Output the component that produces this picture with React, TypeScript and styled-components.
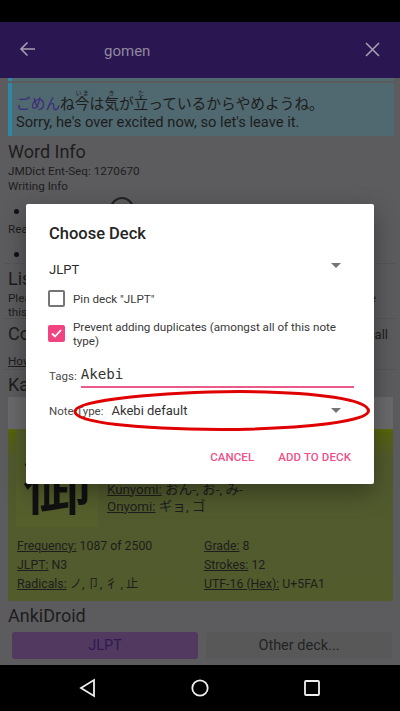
import styled, { createGlobalStyle } from 'styled-components'

const Global = createGlobalStyle`
    html, body {
        background: #000;
        height: 100%;
        margin: 0;
    }

    #root {
        height: 100%;
    }

    * {
        box-sizing: border-box;
    }
`

const Screen = styled.div`
    display: flex;
    flex-direction: column;
    font-family: Roboto, 'Noto Sans CJK JP', sans-serif;
    height: 711px;
    overflow: hidden;
    position: relative;
    width: 400px;
`

const StatusBar = styled.div`
    background: #000;
    flex: 0 0 22px;
`

const AppBar = styled.header`
    align-items: center;
    background: #2a1751;
    display: flex;
    flex: 0 0 56px;
    padding: 0 20px 2px 19px;
`

const SearchText = styled.div`
    color: #8f879d;
    flex: 1;
    font-size: 15px;
    padding-left: 68px;
    padding-top: 3px;
`

const Content = styled.main`
    background: #5c5c5e;
    color: #1d1d1d;
    display: flex;
    flex: 1;
    flex-direction: column;
    min-height: 0;
    padding: 0 3px;
`

const PreviousCard = styled.div`
    background: #50686f;
    border-left: 4px solid #2f86a6;
    flex: 0 0 3px;
    margin: 0 3px 0 5px;
`

const ExampleCard = styled.section`
    background: #50686f;
    border-left: 4px solid #2f86a6;
    flex: 0 0 53px;
    margin: 2px 3px 3px 5px;
    padding-left: 4px;
`

const JapaneseLine = styled.div`
    font-size: 14.7px;
    height: 29px;
    line-height: 20px;
    padding-top: 11px;
    white-space: nowrap;

    ruby {
        ruby-position: over;
    }

    rt {
        font-size: 6px;
    }
`

const Highlight = styled.span`
    color: #3b2a78;
`

const EnglishLine = styled.div`
    font-size: 14.7px;
    line-height: 20px;
    white-space: nowrap;
`

const Block = styled.section<{ $height: number; $top: number }>`
    border-bottom: 1px solid #555557;
    flex: 0 0 ${(p) => p.$height}px;
    overflow: hidden;
    padding: ${(p) => p.$top}px 0 0 5px;
`

const Heading = styled.h2`
    font-size: 18px;
    font-weight: 400;
    line-height: 24px;
    margin: 0;
`

const KanjiHeading = styled(Heading)`
    flex: 0 0 26px;
    padding: 3px 0 0 5px;
`

const Small = styled.div`
    font-size: 11.7px;
    line-height: 15px;
    white-space: nowrap;
`

const Wrapped = styled(Small)`
    display: flex;
    justify-content: space-between;
    line-height: 14px;
    padding-right: 21px;
`

const BulletRow = styled.div<{ $height: number }>`
    align-items: flex-start;
    display: flex;
    gap: 91px;
    height: ${(p) => p.$height}px;
    padding: 2.5px 0 0 6px;
`

const Bullet = styled.span`
    background: #111;
    border-radius: 50%;
    flex: 0 0 5px;
    height: 5px;
    margin-top: 12px;
`

const PlayCircle = styled.span`
    border: 2px solid #222;
    border-radius: 50%;
    display: block;
    height: 24px;
    width: 24px;
`

const CommentsRow = styled.div`
    align-items: center;
    display: flex;
    justify-content: space-between;
    padding-right: 9px;
`

const CommentsLink = styled.span`
    font-size: 13px;
`

const HowLine = styled(Small)`
    margin-top: 7.5px;
    text-decoration: underline;
`

const KanjiTab = styled.div`
    background: #6a6a6c;
    flex: 0 0 32px;
    margin: 0 4px 0 5px;
`

const KanjiCard = styled.section`
    background: #515b2c;
    background-image: linear-gradient(#5a6a10 0, #56620f 4px, #515a2e 30px, #515b2c 100%);
    display: flex;
    flex: 0 0 172px;
    flex-direction: column;
    margin: 0 4px 0 5px;
    padding: 0 8px;
`

const KanjiRow = styled.div`
    display: flex;
    height: 98px;
`

const KanjiBox = styled.div`
    align-items: flex-end;
    background: #555f2c;
    color: #111;
    display: flex;
    font-family: 'Noto Sans CJK JP', sans-serif;
    font-size: 68px;
    font-weight: 500;
    height: 98px;
    justify-content: center;
    line-height: 86px;
    overflow: hidden;
    padding-bottom: 4px;
    width: 82px;
`

const Readings = styled.div`
    font-size: 13.3px;
    line-height: 17px;
    padding: 51.5px 0 0 9px;
`

const Kana = styled.span`
    font-size: 13.6px;
`

const Label = styled.span`
    text-decoration: underline;
`

const FactGrid = styled.div`
    display: grid;
    font-size: 12.3px;
    grid-template-columns: 187px 1fr;
    line-height: 19px;
    margin: 9.5px 0 0 1px;
`

const AnkiBlock = styled.section`
    display: flex;
    flex: 1;
    flex-direction: column;
    padding: 3px 0 0 5px;
`

const AnkiButtons = styled.div`
    display: grid;
    gap: 8px;
    grid-template-columns: 186px 186px;
    margin: 4px 0 0 4px;
`

const AnkiButton = styled.div<{ $primary?: boolean }>`
    align-items: center;
    background: ${(p) => (p.$primary ? '#52395f' : '#585858')};
    border-radius: 3px;
    color: ${(p) => (p.$primary ? '#2d1b52' : '#232323')};
    display: flex;
    font-size: 14.5px;
    height: 27px;
    justify-content: center;
`

const NavBar = styled.nav`
    align-items: center;
    background: #000;
    display: grid;
    flex: 0 0 46px;
    grid-template-columns: repeat(3, 112px);
    justify-content: center;
    justify-items: center;
`

const Dialog = styled.div`
    background: #fff;
    border-radius: 2px;
    box-shadow: 0 8px 24px rgba(0, 0, 0, 0.35);
    color: #2a2a2a;
    display: flex;
    flex-direction: column;
    height: 280px;
    left: 26px;
    padding: 19px 20px 0 23px;
    position: absolute;
    top: 204px;
    width: 348px;
`

const DialogTitle = styled.h1`
    color: #252525;
    font-size: 16.5px;
    font-weight: 500;
    line-height: 22px;
    margin: 0 0 13px;
`

const Spinner = styled.div`
    align-items: center;
    display: flex;
    flex: 0 0 22px;
    font-size: 13px;
    justify-content: space-between;
    padding-right: 13px;
`

const Caret = styled.span<{ $lift?: number }>`
    border-left: 5px solid transparent;
    border-right: 5px solid transparent;
    border-top: 5px solid #757575;
    display: block;
    margin-top: ${(p) => -(p.$lift ?? 0)}px;
`

const Check = styled.div<{ $top: number }>`
    align-items: center;
    color: #3a3a3a;
    display: flex;
    font-size: 11.65px;
    gap: 8px;
    line-height: 14px;
    margin: ${(p) => p.$top}px 0 0 -1px;
`

const CheckText = styled.span<{ $shift?: number }>`
    padding-top: ${(p) => p.$shift ?? 0}px;
`

const Box = styled.span<{ $checked?: boolean }>`
    align-items: center;
    background: ${(p) => (p.$checked ? '#f0437f' : '#fff')};
    border: 2px solid ${(p) => (p.$checked ? '#f0437f' : '#757575')};
    border-radius: 2px;
    display: flex;
    flex: 0 0 17px;
    height: 17px;
    justify-content: center;
`

const TagsRow = styled.div`
    align-items: flex-end;
    color: #4a4a4a;
    display: flex;
    font-size: 11.5px;
    gap: 4px;
    margin-top: 15.5px;
`

const TagsLabel = styled.span`
    padding-bottom: 5px;
`

const TagsInput = styled.div`
    border-bottom: 2px solid #ec5a8c;
    color: #333;
    flex: 1;
    font-family: 'DejaVu Sans Mono', monospace;
    font-size: 14.2px;
    line-height: 19px;
    padding: 1px 0 2px;
`

const NoteRow = styled.div`
    align-items: center;
    color: #4a4a4a;
    display: flex;
    font-size: 11.5px;
    gap: 8px;
    height: 20px;
    margin-top: 13px;
    padding-right: 13px;
`

const NoteValue = styled.div`
    color: #333;
    flex: 1;
    font-size: 13px;
`

const Actions = styled.div`
    color: #f0508a;
    display: flex;
    font-size: 11.5px;
    font-weight: 500;
    gap: 24px;
    justify-content: flex-end;
    letter-spacing: 0.1px;
    line-height: 13px;
    margin-top: 30.5px;
    padding-right: 3px;
`

const Annotation = styled.svg`
    left: 70px;
    pointer-events: none;
    position: absolute;
    top: 388px;
`

function App() {
    return (
        <Screen>
            <Global />
            <StatusBar />
            <AppBar>
                <svg width="17" height="16" viewBox="0 0 17 16" fill="none" stroke="#a59db3" strokeWidth="1.6">
                    <path d="M16 8H2M8.5 1.5 2 8l6.5 6.5" />
                </svg>
                <SearchText>gomen</SearchText>
                <svg width="15" height="15" viewBox="0 0 15 15" fill="none" stroke="#a59db3" strokeWidth="1.6">
                    <path d="M1 1l13 13M14 1 1 14" />
                </svg>
            </AppBar>
            <Content>
                <PreviousCard />
                <ExampleCard>
                    <JapaneseLine>
                        <Highlight>ごめん</Highlight>ね
                        <ruby>今<rt>いま</rt></ruby>は
                        <ruby>気<rt>き</rt></ruby>が
                        <ruby>立<rt>た</rt></ruby>っているからやめようね。
                    </JapaneseLine>
                    <EnglishLine>Sorry, he's over excited now, so let's leave it.</EnglishLine>
                </ExampleCard>
                <Block $height={125} $top={1}>
                    <Heading>Word Info</Heading>
                    <Small>JMDict Ent-Seq: 1270670</Small>
                    <Small>Writing Info</Small>
                    <BulletRow $height={28}>
                        <Bullet />
                        <PlayCircle />
                    </BulletRow>
                    <Small>Reading Info</Small>
                    <BulletRow $height={27}>
                        <Bullet />
                    </BulletRow>
                </Block>
                <Block $height={55} $top={3}>
                    <Heading>Lists</Heading>
                    <Wrapped>
                        <span>Please</span>
                        <span>e</span>
                    </Wrapped>
                    <Wrapped>
                        <span>this</span>
                    </Wrapped>
                </Block>
                <Block $height={51} $top={3}>
                    <CommentsRow>
                        <Heading>Comments</Heading>
                        <CommentsLink>all</CommentsLink>
                    </CommentsRow>
                    <HowLine>How</HowLine>
                </Block>
                <KanjiHeading>Kanji</KanjiHeading>
                <KanjiTab />
                <KanjiCard>
                    <KanjiRow>
                        <KanjiBox>御</KanjiBox>
                        <Readings>
                            <div>
                                <Label>Kunyomi:</Label> <Kana>おん-, お-, み-</Kana>
                            </div>
                            <div>
                                <Label>Onyomi:</Label> <Kana>ギョ, ゴ</Kana>
                            </div>
                        </Readings>
                    </KanjiRow>
                    <FactGrid>
                        <div>
                            <Label>Frequency:</Label> 1087 of 2500
                        </div>
                        <div>
                            <Label>Grade:</Label> 8
                        </div>
                        <div>
                            <Label>JLPT:</Label> N3
                        </div>
                        <div>
                            <Label>Strokes:</Label> 12
                        </div>
                        <div>
                            <Label>Radicals:</Label> ノ,  卩, 彳 , 止
                        </div>
                        <div>
                            <Label>UTF-16 (Hex):</Label> U+5FA1
                        </div>
                    </FactGrid>
                </KanjiCard>
                <AnkiBlock>
                    <Heading>AnkiDroid</Heading>
                    <AnkiButtons>
                        <AnkiButton $primary>JLPT</AnkiButton>
                        <AnkiButton>Other deck...</AnkiButton>
                    </AnkiButtons>
                </AnkiBlock>
            </Content>
            <NavBar>
                <svg width="18" height="20" viewBox="0 0 18 20" fill="none" stroke="#eee" strokeWidth="1.8">
                    <path d="M15 2v16L2 10z" />
                </svg>
                <svg width="18" height="18" viewBox="0 0 18 18" fill="none" stroke="#eee" strokeWidth="1.8">
                    <circle cx="9" cy="9" r="7.7" />
                </svg>
                <svg width="16" height="16" viewBox="0 0 16 16" fill="none" stroke="#eee" strokeWidth="1.8">
                    <rect x="1" y="1" width="14" height="14" rx="1" />
                </svg>
            </NavBar>
            <Dialog>
                <DialogTitle>Choose Deck</DialogTitle>
                <Spinner>
                    <span>JLPT</span>
                    <Caret $lift={8} />
                </Spinner>
                <Check $top={10}>
                    <Box />
                    <CheckText>Pin deck "JLPT"</CheckText>
                </Check>
                <Check $top={11}>
                    <Box $checked>
                        <svg width="11" height="9" viewBox="0 0 11 9" fill="none" stroke="#fff" strokeWidth="1.8">
                            <path d="M1 4.5 4 7.5 10 1" />
                        </svg>
                    </Box>
                    <CheckText $shift={2}>Prevent adding duplicates (amongst all of this note type)</CheckText>
                </Check>
                <TagsRow>
                    <TagsLabel>Tags:</TagsLabel>
                    <TagsInput>Akebi</TagsInput>
                </TagsRow>
                <NoteRow>
                    <span>Note Type:</span>
                    <NoteValue>Akebi default</NoteValue>
                    <Caret />
                </NoteRow>
                <Actions>
                    <span>CANCEL</span>
                    <span>ADD TO DECK</span>
                </Actions>
            </Dialog>
            <Annotation width="304" height="46" viewBox="0 0 304 46" fill="none">
                <path
                    d="M5 23C8 12 90 4 170 3.500C250 4 298 12 298.500 23C298 33 240 41 150 41.500C70 41 3 35 5 23Z"
                    stroke="#e00000"
                    strokeWidth="3"
                />
            </Annotation>
        </Screen>
    )
}

export default App
